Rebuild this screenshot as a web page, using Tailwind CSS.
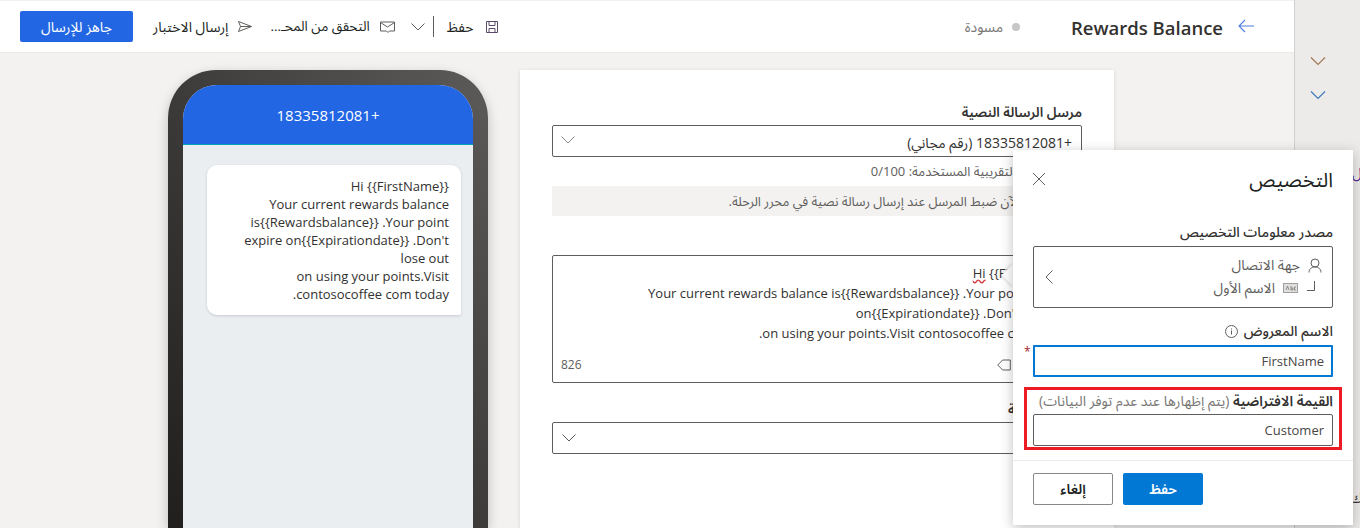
<!DOCTYPE html>
<html lang="ar" dir="rtl">
<head>
    <meta charset="UTF-8">
    <title>Rewards Balance</title>
    <script src="https://cdn.jsdelivr.net/npm/@tailwindcss/browser@4"></script>
</head>
<body class="w-[1360px] h-[528px] overflow-hidden relative flex bg-[#f3f2f1] text-[#323130] text-sm font-['Open_Sans','Noto_Sans_Arabic','Noto_Sans','DejaVu_Sans',sans-serif]">

    <!-- Right rail -->
    <aside class="w-[66px] h-full shrink-0 bg-[#edebe9] border-l border-[#d2d0ce] flex flex-col items-end pt-[56px] pl-[15px] gap-[24px]">
        <svg class="w-4 h-[10px]" viewBox="0 0 16 10" fill="none" stroke="#a07a58" stroke-width="1.2"><path d="M1 1.500l7 7 7-7"/></svg>
        <svg class="w-4 h-[10px]" viewBox="0 0 16 10" fill="none" stroke="#3f7cb8" stroke-width="1.2"><path d="M1 1.500l7 7 7-7"/></svg>
    </aside>

    <div class="flex-1 flex flex-col min-w-0">
        <!-- Top bar -->
        <header class="h-[53px] shrink-0 bg-white border-t border-[#f3f2f1] border-b border-b-[#edebe9] flex items-center pr-[40px] pl-[20px]">
            <svg class="w-[16px] h-[14px] shrink-0 -mt-[2px]" viewBox="0 0 16 14" fill="none" stroke="#4f7fe0" stroke-width="1.1"><path d="M16 7H1M7 1L1 7l6 6"/></svg>
            <h1 class="mr-[16px] mt-[3px] text-[18.500px] leading-[28px] font-semibold w-[151px] whitespace-nowrap" dir="ltr">Rewards Balance</h1>
            <span class="mr-[51px] w-[8px] h-[8px] rounded-full bg-[#c8c6c4] shrink-0"></span>
            <span class="mr-[9px] mt-[1px] text-[#797775]">مسودة</span>

            <div class="mr-auto flex items-center h-[32px]">
                <svg class="w-[14px] h-[14px] shrink-0" viewBox="0 0 14 14" fill="none" stroke="#5c4a6b" stroke-width="1"><path d="M1.500 1.500h11v11h-11zM4 1.500v4h6v-4M4 12.500v-4h6v4"/></svg>
                <span class="mr-[11px] text-[#201f1e] whitespace-nowrap">حفظ</span>
                <span class="mr-[13px] w-px h-[21px] bg-[#605e5c]"></span>
                <svg class="mr-[8px] w-[14px] h-[8px]" viewBox="0 0 14 8" fill="none" stroke="#605e5c"><path d="M.5.5L7 7 13.500.5"/></svg>
                <svg class="mr-[16px] w-[15px] h-[12px]" viewBox="0 0 15 12" fill="none" stroke="#605e5c"><path d="M.5 1h14v9h-5l-1.500 1.500L6.500 10h-6zM.5 1.500L7.500 6l7-4.500"/></svg>
                <span class="mr-[10px] text-[13.500px] text-[#201f1e] whitespace-nowrap">التحقق من المحـ...</span>
                <svg class="mr-[18px] w-[14px] h-[11px]" viewBox="0 0 14 11" fill="none" stroke="#605e5c"><path d="M13.500 5.500L.5.5l2 5-2 5zM2.500 5.500h11"/></svg>
                <span class="mr-[10px] text-[#201f1e] whitespace-nowrap">إرسال الاختبار</span>
                <button class="mr-[20px] w-[113px] h-[31px] bg-[#2266e3] text-white rounded-[2px] text-sm">جاهز للإرسال</button>
            </div>
        </header>

        <!-- Canvas -->
        <main class="flex-1 flex items-start pt-[17px] pr-[180px] min-h-0">
            <section class="w-[594px] h-[458px] shrink-0 bg-white shadow-[0_1px_4px_rgba(0,0,0,0.12)] px-[32px] pt-[32px]">
                <label class="block text-[13.500px] font-semibold leading-[20px] mb-[3px] pt-[1px] -mt-[1px]">مرسل الرسالة النصية</label>
                <div class="h-[32px] border border-[#605e5c] rounded-[2px] flex items-center justify-between pr-[9px] pl-[8px]">
                    <span class="pt-[3px]">+18335812081 (رقم مجاني)</span>
                    <svg class="w-[14px] h-[8px] -mt-[3px]" viewBox="0 0 14 8" fill="none" stroke="#8a8886"><path d="M.5.5L7 7 13.500.5"/></svg>
                </div>
                <p class="mt-[6px] text-[13px] leading-[16px] text-[#605e5c]">عدد المقاطع التقريبية المستخدمة: 0/100</p>
                <div class="mt-[7px] h-[30px] bg-[#f3f2f1] flex items-center pr-[24px] text-[13px] text-[#605e5c] whitespace-nowrap">يمكنك الآن ضبط المرسل عند إرسال رسالة نصية في محرر الرحلة.</div>

                <div class="mt-[39px] h-[128px] border border-[#605e5c] rounded-[2px] flex flex-col pr-[10px] pl-[8px] pt-[7px]">
                    <div class="leading-[20px] text-[13px] whitespace-nowrap">
                        <p><span class="underline decoration-wavy decoration-[#d13438]">Hi</span> {{FirstName}}</p>
                        <p>Your current rewards balance is{{Rewardsbalance}} .Your point expire</p>
                        <p>on{{Expirationdate}} .Don't lose out</p>
                        <p>on using your points.Visit contosocoffee com today.</p>
                    </div>
                    <div class="mt-auto mb-[9px] flex justify-between items-center text-xs text-[#605e5c]">
                        <svg class="mr-[60px] w-[14px] h-[12px]" viewBox="0 0 14 12" fill="none" stroke="#605e5c"><path d="M.7 6l5-5h7.600v10H5.700z"/></svg>
                        <span>826</span>
                    </div>
                </div>

                <label class="block mt-[16px] text-[13.500px] font-semibold leading-[20px] mb-[3px]">نوعية الرسالة</label>
                <div class="h-[32px] border border-[#605e5c] rounded-[2px] flex items-center justify-end pl-[9px]">
                    <svg class="w-[14px] h-[8px]" viewBox="0 0 14 8" fill="none" stroke="#605e5c"><path d="M.5.5L7 7 13.500.5"/></svg>
                </div>
            </section>

            <!-- Phone preview -->
            <div class="mr-[32px] w-[320px] h-[458px] shrink-0 rounded-t-[48px] pt-[15px] px-[15px] bg-linear-to-tr from-[#201f1d] to-[#5d5b59] shadow-[0_4px_12px_rgba(0,0,0,0.22)]">
                <div class="h-full rounded-t-[34px] bg-[#ebeef0] overflow-hidden">
                    <div class="h-[60px] bg-[#2266e3] border-b border-[#00a5b5] flex items-center justify-center text-white text-[15px] pt-[2px]">+18335812081</div>
                    <div class="mr-[12px] mt-[20px] w-[254px] h-[150px] bg-white rounded-tl-[10px] rounded-tr-[10px] rounded-bl-[10px] rounded-br-[2px] shadow-[0_1px_3px_rgba(60,60,110,0.2)] px-[12px] pt-[12px] text-[13px] leading-[18px]">
                        <p>Hi {{FirstName}}</p>
                        <p>Your current rewards balance</p>
                        <p>is{{Rewardsbalance}} .Your point</p>
                        <p>expire on{{Expirationdate}} .Don't</p>
                        <p>lose out</p>
                        <p>on using your points.Visit</p>
                        <p>contosocoffee com today.</p>
                    </div>
                </div>
            </div>
        </main>
    </div>

    <!-- Text behind the panel, peeking out over the rail -->
    <span class="absolute left-[1352px] top-[163px] text-sm text-[#5c2d91]">ل</span>
    <span class="absolute left-[1350px] top-[488px] text-sm">ك</span>

    <!-- Pointer of the flyout -->
    <span class="absolute left-[1005px] top-[267px] w-[16px] h-[16px] rotate-45 bg-white shadow-[-1px_1px_3px_rgba(0,0,0,0.15)]"></span>

    <!-- Personalization flyout -->
    <div class="absolute left-[1013px] top-[150px] w-[340px] h-[375px] bg-white shadow-[0_3px_12px_rgba(0,0,0,0.25)] flex flex-col">
        <div class="h-[72px] shrink-0 flex items-start justify-between pr-[20px] pl-[19px] pt-[16px]">
            <h2 class="text-[20px] leading-[28px] text-[#201f1e]">التخصيص</h2>
            <svg class="w-[14px] h-[14px] mt-[6px]" viewBox="0 0 14 14" fill="none" stroke="#605e5c"><path d="M1 1l12 12M13 1L1 13"/></svg>
        </div>
        <div class="px-[20px]">
            <label class="block font-medium leading-[20px] mb-[4px]">مصدر معلومات التخصيص</label>
            <div class="h-[62px] border border-[#605e5c] rounded-[2px] flex items-center pr-[10px] pl-[11px] justify-between">
                <div class="flex flex-col">
                    <div class="flex items-center h-[22px] text-[#605e5c]">
                        <svg class="w-[14px] h-[15px]" viewBox="0 0 14 15" fill="none" stroke="#605e5c"><circle cx="7" cy="5" r="4"/><path d="M1 14.500c0-3.500 2.500-5.500 6-5.500s6 2 6 5.500"/></svg>
                        <span class="mr-[8px]">جهة الاتصال</span>
                    </div>
                    <div class="flex items-center h-[24px] text-[#605e5c]">
                        <svg class="w-[8px] h-[10px] mr-[7px] -mt-[5px]" viewBox="0 0 8 10" fill="none" stroke="#605e5c"><path d="M7.500 0v9.500H0"/></svg>
                        <svg class="mr-[9px] w-[15px] h-[10px]" viewBox="0 0 15 10"><rect x=".5" y=".5" width="14" height="9" fill="#e1dfdd" stroke="#a19f9d"/><path d="M3 7l1.500-4L6 7M8 3v4h2V5H8M13 4h-1.500v3H13" fill="none" stroke="#605e5c" stroke-width=".6"/></svg>
                        <span class="mr-[8px]">الاسم الأول</span>
                    </div>
                </div>
                <svg class="w-[8px] h-[14px]" viewBox="0 0 8 14" fill="none" stroke="#605e5c"><path d="M7.500.5L1 7l6.500 6.500"/></svg>
            </div>

            <label class="mt-[13px] flex items-center font-medium leading-[20px] mb-[4px]">
                الاسم المعروض
                <svg class="mr-[6px] w-[13px] h-[13px]" viewBox="0 0 13 13" fill="none" stroke="#605e5c"><circle cx="6.500" cy="6.500" r="6"/><path d="M6.500 5.500v4M6.500 3.500v1"/></svg>
            </label>
            <div class="relative h-[32px] border-2 border-[#0078d4] rounded-[1px] flex items-center pr-[7px] text-[13px] text-[#484644]">
                FirstName
                <span class="absolute -left-[11px] -top-[3px] text-xs text-[#a4262c]">*</span>
            </div>

            <!-- Highlighted default value field -->
            <div class="mt-[10px] -mx-[9px] h-[63px] border-[3px] border-[#ed1c24] px-[6px] pt-[1px]">
                <label class="block text-sm leading-[20px] mb-[3px] whitespace-nowrap"><span class="font-semibold">القيمة الافتراضية</span> <span class="text-[#797775]">(يتم إظهارها عند عدم توفر البيانات)</span></label>
                <div class="h-[32px] border border-[#605e5c] rounded-[2px] flex items-center pr-[8px] text-[13px] text-[#484644]">Customer</div>
            </div>
        </div>
        <div class="mt-[10px] border-t border-[#edebe9] pt-[12px] px-[20px] flex justify-start gap-[10px]" dir="ltr">
            <button class="w-[80px] h-[32px] border border-[#8a8886] rounded-[2px] font-semibold text-[#201f1e]">إلغاء</button>
            <button class="w-[80px] h-[32px] bg-[#0078d4] rounded-[2px] font-semibold text-white">حفظ</button>
        </div>
    </div>
</body>
</html>
